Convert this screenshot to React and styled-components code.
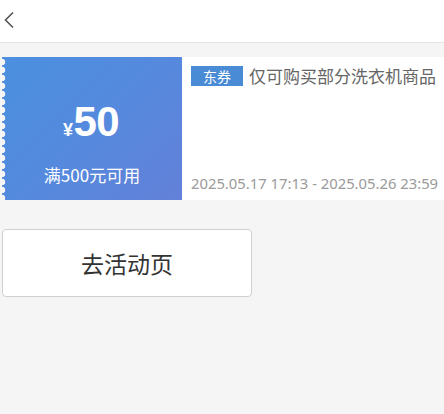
import styled, { createGlobalStyle } from "styled-components"

const Global = createGlobalStyle`
    body {
        margin: 0;
        background: #f5f5f5;
        font-family: "Noto Sans CJK SC", "Noto Sans", sans-serif;
    }
`

export default function App () {
    return(
        <Page>
            <Global />
            <Header>
                <BackIcon width="12" height="18" viewBox="0 0 12 18">
                    <path d="M10 1.5 L2.5 9 L10 16.5" fill="none" stroke="#555" strokeWidth="1.6" />
                </BackIcon>
            </Header>
            <Coupon>
                <Left>
                    <Amount><Yen>¥</Yen>50</Amount>
                    <Condition>满500元可用</Condition>
                </Left>
                <Right>
                    <TitleRow>
                        <Tag>东券</Tag>
                        <Title>仅可购买部分洗衣机商品</Title>
                    </TitleRow>
                    <DateText>2025.05.17 17:13 - 2025.05.26 23:59</DateText>
                </Right>
            </Coupon>
            <Button>去活动页</Button>
        </Page>
    )
}

const Page = styled.div`
    min-height: 414px;
    background: #f5f5f5;
`
const Header = styled.div`
    height: 43px;
    background: #ffffff;
    border-bottom: 1px solid #e3e3e3;
    display: flex;
    align-items: center;
    padding-left: 3px;
    box-sizing: border-box;
`
const BackIcon = styled.svg`
    display: block;
    margin-top: -2px;
`
const Coupon = styled.div`
    margin: 14px 0 0 2px;
    height: 143px;
    display: flex;
`
const Left = styled.div`
    width: 180px;
    flex-shrink: 0;
    display: flex;
    flex-direction: column;
    align-items: center;
    color: white;
    background:
        radial-gradient(circle at 0 4px, #f5f5f5 3px, transparent 3.6px) 0 1px / 8px 8px repeat-y,
        linear-gradient(135deg, #4b90df 0%, #5689dd 55%, #6380d8 100%);
`
const Amount = styled.div`
    margin-top: 41px;
    font-family: "Liberation Sans", Arial, sans-serif;
    font-weight: bold;
    font-size: 42px;
    line-height: 48px;
    letter-spacing: -0.5px;
    padding-right: 2px;
`
const Yen = styled.span`
    font-size: 18px;
    margin-right: 1px;
`
const Condition = styled.div`
    margin-top: 10px;
    font-size: 17px;
    line-height: 22px;
`
const Right = styled.div`
    flex: 1;
    background: #ffffff;
    display: flex;
    flex-direction: column;
    justify-content: space-between;
    padding: 9px 0 7px 9px;
`
const TitleRow = styled.div`
    display: flex;
    align-items: center;
`
const Tag = styled.div`
    width: 52px;
    height: 20px;
    flex-shrink: 0;
    background: #4a8bd6;
    color: white;
    font-size: 14px;
    line-height: 20px;
    text-align: center;
`
const Title = styled.div`
    margin-left: 6px;
    color: #666666;
    font-size: 17px;
    line-height: 20px;
    white-space: nowrap;
`
const DateText = styled.div`
    color: #9a9a9a;
    font-family: "Noto Sans", sans-serif;
    font-size: 14.8px;
    line-height: 20px;
    white-space: nowrap;
`
const Button = styled.div`
    margin: 29px 0 0 2px;
    width: 250px;
    height: 68px;
    box-sizing: border-box;
    background: #ffffff;
    border: 1px solid #d0d0d0;
    border-radius: 4px;
    display: flex;
    align-items: center;
    justify-content: center;
    font-size: 23px;
    color: #333333;
`
